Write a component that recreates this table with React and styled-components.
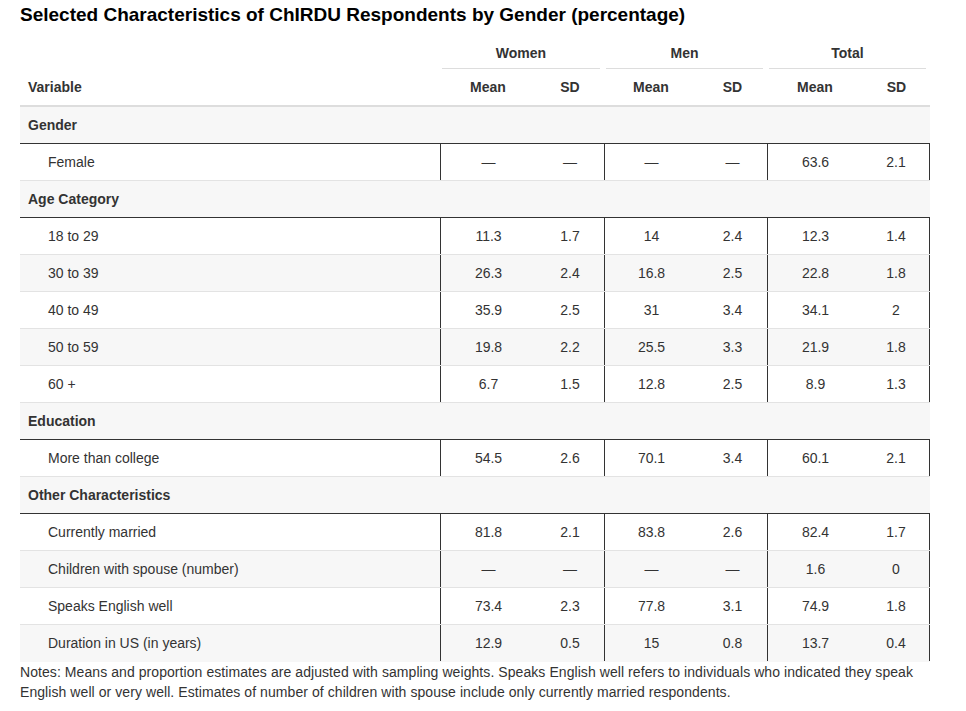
import React from 'react';
import styled, { createGlobalStyle } from 'styled-components';

const GlobalStyle = createGlobalStyle`
    body {
        margin: 0;
        background: #ffffff;
        font-family: "Liberation Sans", Arial, Helvetica, sans-serif;
        color: #333333;
    }
`;

const COLS = '420px 96px 68px 94px 69px 96px 67px';

const groups = [
    {
        label: 'Gender',
        rows: [['Female', '—', '—', '—', '—', '63.6', '2.1']],
    },
    {
        label: 'Age Category',
        rows: [
            ['18 to 29', '11.3', '1.7', '14', '2.4', '12.3', '1.4'],
            ['30 to 39', '26.3', '2.4', '16.8', '2.5', '22.8', '1.8'],
            ['40 to 49', '35.9', '2.5', '31', '3.4', '34.1', '2'],
            ['50 to 59', '19.8', '2.2', '25.5', '3.3', '21.9', '1.8'],
            ['60 +', '6.7', '1.5', '12.8', '2.5', '8.9', '1.3'],
        ],
    },
    {
        label: 'Education',
        rows: [['More than college', '54.5', '2.6', '70.1', '3.4', '60.1', '2.1']],
    },
    {
        label: 'Other Characteristics',
        rows: [
            ['Currently married', '81.8', '2.1', '83.8', '2.6', '82.4', '1.7'],
            ['Children with spouse (number)', '—', '—', '—', '—', '1.6', '0'],
            ['Speaks English well', '73.4', '2.3', '77.8', '3.1', '74.9', '1.8'],
            ['Duration in US (in years)', '12.9', '0.5', '15', '0.8', '13.7', '0.4'],
        ],
    },
];

function App() {
    return (
        <Page>
            <GlobalStyle />
            <Title>Selected Characteristics of ChIRDU Respondents by Gender (percentage)</Title>
            <Table>
                <SpannerRow>
                    <SpannerCell $span={1} />
                    {['Women', 'Men', 'Total'].map((g) => (
                        <SpannerCell key={g} $span={2}>
                            <SpannerLabel>{g}</SpannerLabel>
                        </SpannerCell>
                    ))}
                </SpannerRow>
                <HeaderRow>
                    <HeadCell $left>Variable</HeadCell>
                    {['Women', 'Men', 'Total'].map((g) => (
                        <React.Fragment key={g}>
                            <HeadCell>Mean</HeadCell>
                            <HeadCell>SD</HeadCell>
                        </React.Fragment>
                    ))}
                </HeaderRow>
                {groups.map((group, gi) => (
                    <React.Fragment key={group.label}>
                        <GroupRow>{group.label}</GroupRow>
                        {group.rows.map((row, ri) => {
                            const last = gi === groups.length - 1 && ri === group.rows.length - 1;
                            return (
                                <DataRow key={row[0]} $striped={ri % 2 === 1} $last={last}>
                                    <NameCell>{row[0]}</NameCell>
                                    {row.slice(1).map((v, ci) => (
                                        <NumCell key={ci} $divider={ci % 2 === 0} $end={ci === 5}>
                                            {v}
                                        </NumCell>
                                    ))}
                                </DataRow>
                            );
                        })}
                    </React.Fragment>
                ))}
            </Table>
            <Notes>
                Notes: Means and proportion estimates are adjusted with sampling weights. Speaks English well refers to
                individuals who indicated they speak English well or very well. Estimates of number of children with
                spouse include only currently married respondents.
            </Notes>
        </Page>
    );
}

export default App;

const Page = styled.div`
    padding: 4px 20px 20px 20px;
    width: 910px;
`;

const Title = styled.h2`
    margin: 0;
    font-size: 19px;
    line-height: 22px;
    font-weight: bold;
    color: #000000;
`;

const Table = styled.div`
    width: 910px;
    font-size: 14px;
    line-height: 17px;
`;

const SpannerRow = styled.div`
    display: grid;
    grid-template-columns: 420px 164px 163px 163px;
    padding-top: 19px;
`;

const SpannerCell = styled.div`
    padding: 0 4px 0 2px;
    text-align: center;
    font-weight: bold;
`;

const SpannerLabel = styled.div`
    padding-bottom: 6px;
    border-bottom: 1px solid #dddddd;
`;

const HeaderRow = styled.div`
    display: grid;
    grid-template-columns: ${COLS};
    border-bottom: 2px solid #dddddd;
`;

const HeadCell = styled.div`
    padding: 10px 8px 9px 8px;
    font-weight: bold;
    text-align: ${(p) => (p.$left ? 'left' : 'center')};
`;

const GroupRow = styled.div`
    background: #f7f7f7;
    padding: 10px 8px 9px 8px;
    font-weight: bold;
    border-bottom: 1px solid #333333;
`;

const DataRow = styled.div`
    display: grid;
    grid-template-columns: ${COLS};
    background: ${(p) => (p.$striped ? '#f7f7f7' : '#ffffff')};
    border-bottom: 1px solid ${(p) => (p.$last ? 'transparent' : '#e3e3e3')};
`;

const NameCell = styled.div`
    padding: 10px 8px 9px 28px;
`;

const NumCell = styled.div`
    padding: 10px 8px 9px 8px;
    text-align: center;
    border-left: ${(p) => (p.$divider ? '1px solid #333333' : 'none')};
    border-right: ${(p) => (p.$end ? '1px solid #333333' : 'none')};
`;

const Notes = styled.div`
    font-size: 14px;
    line-height: 20px;
    letter-spacing: 0.07px;
`;
